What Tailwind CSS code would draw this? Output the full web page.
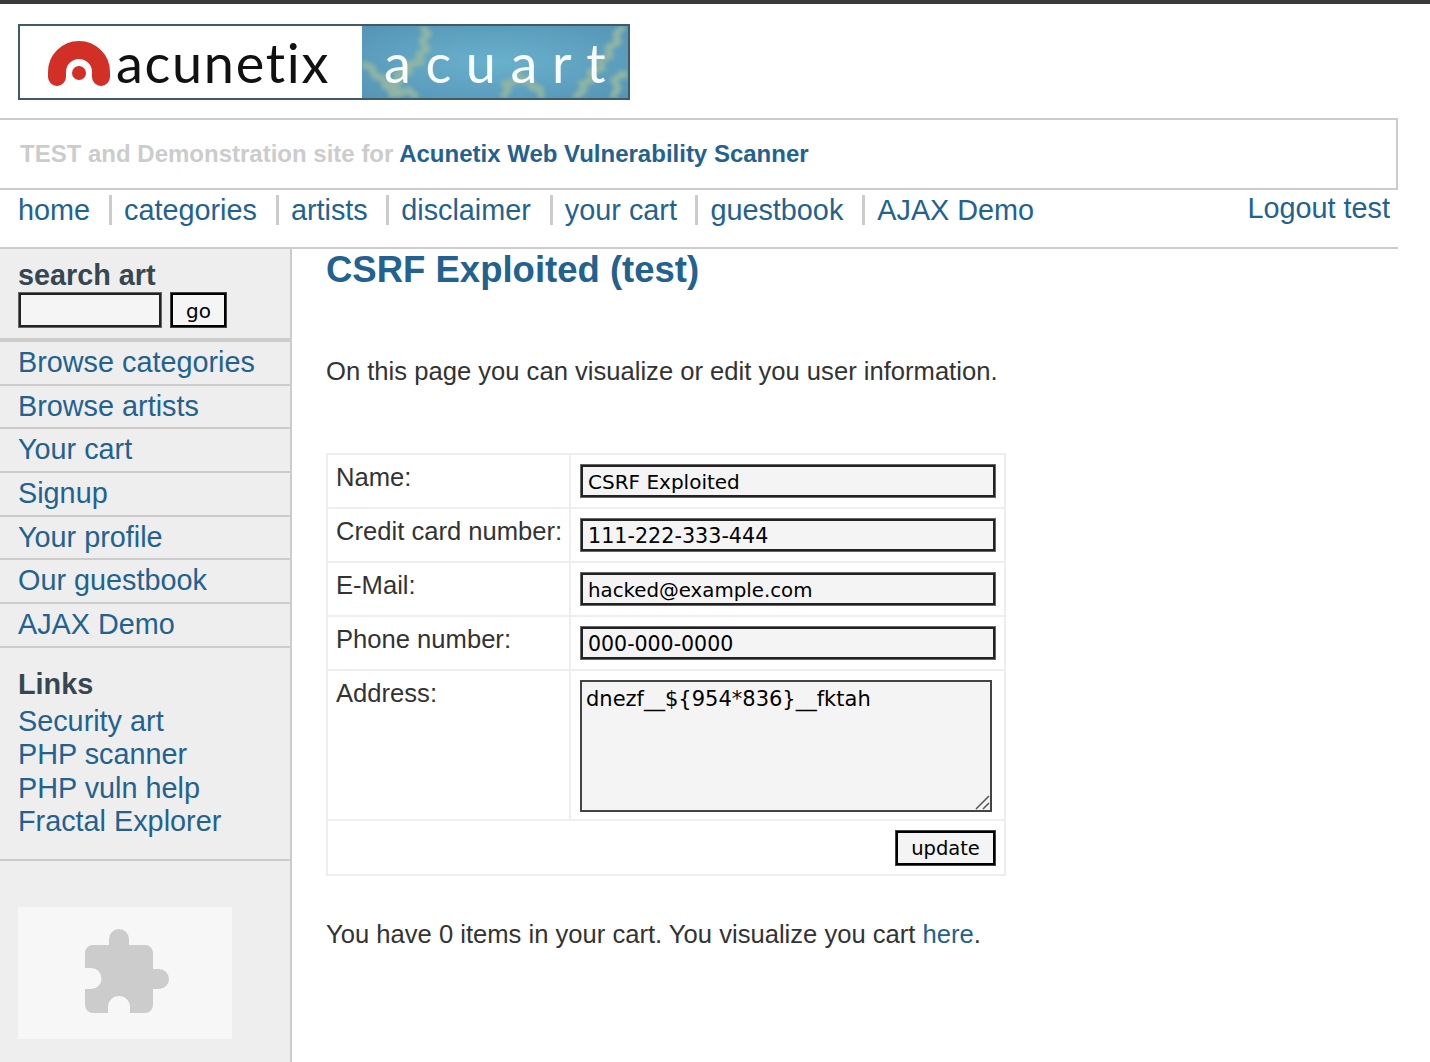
<!DOCTYPE html>
<html lang="en">
<head>
    <meta charset="UTF-8">
    <title>user info</title>
    <script src="https://cdn.jsdelivr.net/npm/@tailwindcss/browser@4"></script>
</head>
<body class="bg-white font-['Liberation_Sans',Arial,sans-serif] text-[#333] h-[1062px] overflow-hidden">

<div class="h-[4px] bg-[#3a3a3a]"></div>

<!-- logo -->
<div class="h-[114px] pt-[20px] pl-[18px]">
    <div class="flex w-[612px] h-[76px] border-2 border-[#3f5a68]">
        <div class="w-[342px] bg-white flex items-center pl-[27px]">
            <svg width="66" height="50" viewBox="47 38 66 50" class="shrink-0 mt-[3px]">
                <path d="M57 76V71a22 22 0 0 1 44 0V76" fill="none" stroke="#d23027" stroke-width="18" stroke-linecap="round"/>
                <circle cx="79" cy="72" r="7" fill="#d23027"/>
            </svg>
            <span class="font-['Lato',sans-serif] text-[54px] leading-none text-[#111] tracking-[1.7px] ml-[3px] mt-[2px]">acunetix</span>
        </div>
        <div class="relative flex-1 bg-radial from-[#69b1cd] to-[#5594b5] overflow-hidden flex items-center pl-[22px]">
            <svg class="absolute inset-0 blur-[2px]" width="266" height="72" viewBox="0 0 266 72" fill="none" stroke="#8fb5a4" stroke-width="7">
                <path d="M60 0l6 8-6 7 5 8-8 6 2 7-14 3 2 7-12 2 2 8-10 2 4 14"/>
                <path d="M0 38l10 4 3 8 8 2 2 8 10-2 4 10 10-4 8 8"/>
                <path d="M140 72l6-8-3-6 9-2 4-7 6 6 6-2 2 8 8 2 2 11"/>
                <path d="M262 0l-8 8 2 8-10 6 2 8-10 4 2 8-12 4 2 8-10 4 2 6-10 8"/>
                <path d="M250 72l6-10-4-8 8-6 6 2"/>
            </svg>
            <span class="relative font-['Lato',sans-serif] text-[54px] leading-none text-white/95 tracking-[14.6px] mt-[2px] whitespace-nowrap">acuart</span>
        </div>
    </div>
</div>

<!-- tagline -->
<div class="w-[1398px] h-[72px] border-y-2 border-r-2 border-[#ccc] pl-[20px] flex items-center">
    <p class="text-[24px] font-bold text-[#ccc]">TEST and Demonstration site for <span class="text-[#23628f]">Acunetix Web Vulnerability Scanner</span></p>
</div>

<!-- top nav -->
<nav class="w-[1398px] h-[59px] border-b-2 border-[#ccc] flex justify-between pl-[18px] pr-[8px] text-[28.8px] text-[#23628f]">
    <div class="flex items-start pt-[5px] leading-[30px]">
        <a class="pr-[19px]">home</a>
        <a class="border-l-[3px] border-[#ccc] pl-[12px] pr-[19px]">categories</a>
        <a class="border-l-[3px] border-[#ccc] pl-[12px] pr-[18.5px]">artists</a>
        <a class="border-l-[3px] border-[#ccc] pl-[12px] pr-[19px]">disclaimer</a>
        <a class="border-l-[3px] border-[#ccc] pl-[12px] pr-[18.5px]">your cart</a>
        <a class="border-l-[3px] border-[#ccc] pl-[12px] pr-[19px]">guestbook</a>
        <a class="border-l-[3px] border-[#ccc] pl-[12px]">AJAX Demo</a>
    </div>
    <a class="pt-[3px] leading-[30px]">Logout test</a>
</nav>

<div class="flex h-[814px]">
    <!-- sidebar -->
    <aside class="w-[292px] shrink-0 bg-[#eee] border-r-2 border-[#ccc] text-[28.8px] text-[#23628f]">
        <div class="h-[93px] border-b-4 border-[#ccc] pl-[18px] pt-[10px]">
            <h3 class="font-bold text-[#37474f] leading-[32px]">search art</h3>
            <div class="flex gap-[8px] mt-[1px]">
                <div class="w-[144px] h-[36px] bg-[#f5f5f5] border border-[#666] shadow-[inset_0_0_0_2px_#222]"></div>
                <div class="w-[57px] h-[36px] bg-[#f5f5f5] border border-[#444] shadow-[inset_0_0_0_2px_#000] font-['DejaVu_Sans',sans-serif] text-[20px] leading-[37px] text-center text-black">go</div>
            </div>
        </div>
        <ul class="leading-[41px]">
            <li class="h-[43.67px] border-b-2 border-[#ccc] pl-[18px]">Browse categories</li>
            <li class="h-[43.67px] border-b-2 border-[#ccc] pl-[18px]">Browse artists</li>
            <li class="h-[43.67px] border-b-2 border-[#ccc] pl-[18px]">Your cart</li>
            <li class="h-[43.67px] border-b-2 border-[#ccc] pl-[18px]">Signup</li>
            <li class="h-[43.67px] border-b-2 border-[#ccc] pl-[18px]">Your profile</li>
            <li class="h-[43.67px] border-b-2 border-[#ccc] pl-[18px]">Our guestbook</li>
            <li class="h-[43.67px] border-b-2 border-[#ccc] pl-[18px]">AJAX Demo</li>
        </ul>
        <div class="h-[213.3px] border-b-2 border-[#ccc] pl-[18px] pt-[18px] leading-[33.5px]">
            <h3 class="font-bold text-[#37474f] leading-[36px] mb-[3px]">Links</h3>
            <div>Security art</div>
            <div>PHP scanner</div>
            <div>PHP vuln help</div>
            <div>Fractal Explorer</div>
        </div>
        <div class="ml-[18px] mt-[46px] w-[214px] h-[132px] bg-[#f7f7f7] flex items-center justify-center">
            <svg width="84" height="84" viewBox="0 0 84 84" class="ml-[4px] mt-[-4px]">
                <path fill="#ccc" d="M8 16H24V10a10 10 0 0 1 20 0V16H60a8 8 0 0 1 8 8V40H74a10 10 0 0 1 0 20H68V76a8 8 0 0 1-8 8H45V78a11 11 0 0 0-22 0V84H8a8 8 0 0 1-8-8V60H6a10.5 10.5 0 0 0 0-21H0V24a8 8 0 0 1 8-8z"/>
            </svg>
        </div>
    </aside>

    <!-- main -->
    <main class="pl-[34px] text-[25.6px]">
        <h2 class="text-[36.5px] font-bold text-[#23628f] leading-[42px]">CSRF Exploited (test)</h2>
        <p class="mt-[64px] leading-[32px]">On this page you can visualize or edit you user information.</p>

        <div class="mt-[66px] w-[680px] border-2 border-[#eee]">
            <div class="flex h-[54px] border-b-2 border-[#eee]">
                <div class="w-[243px] border-r-2 border-[#eee] pl-[8px] pt-[6px] leading-[32px]">Name:</div>
                <div class="pl-[9px] pt-[9px]"><div class="w-[416px] h-[34px] bg-[#f4f4f4] border border-[#666] shadow-[inset_0_0_0_2px_#222] pl-[7px] pt-[1px] font-['DejaVu_Sans',sans-serif] text-[20px] leading-[33px] text-black">CSRF Exploited</div></div>
            </div>
            <div class="flex h-[54px] border-b-2 border-[#eee]">
                <div class="w-[243px] border-r-2 border-[#eee] pl-[8px] pt-[6px] leading-[32px]">Credit card number:</div>
                <div class="pl-[9px] pt-[9px]"><div class="w-[416px] h-[34px] bg-[#f4f4f4] border border-[#666] shadow-[inset_0_0_0_2px_#222] pl-[7px] pt-[1px] font-['DejaVu_Sans',sans-serif] text-[20.7px] leading-[33px] text-black">111-222-333-444</div></div>
            </div>
            <div class="flex h-[54px] border-b-2 border-[#eee]">
                <div class="w-[243px] border-r-2 border-[#eee] pl-[8px] pt-[6px] leading-[32px]">E-Mail:</div>
                <div class="pl-[9px] pt-[9px]"><div class="w-[416px] h-[34px] bg-[#f4f4f4] border border-[#666] shadow-[inset_0_0_0_2px_#222] pl-[7px] pt-[1px] font-['DejaVu_Sans',sans-serif] text-[19.8px] leading-[33px] text-black">hacked@example.com</div></div>
            </div>
            <div class="flex h-[54px] border-b-2 border-[#eee]">
                <div class="w-[243px] border-r-2 border-[#eee] pl-[8px] pt-[6px] leading-[32px]">Phone number:</div>
                <div class="pl-[9px] pt-[9px]"><div class="w-[416px] h-[34px] bg-[#f4f4f4] border border-[#666] shadow-[inset_0_0_0_2px_#222] pl-[7px] pt-[1px] font-['DejaVu_Sans',sans-serif] text-[20.5px] leading-[33px] text-black">000-000-0000</div></div>
            </div>
            <div class="flex h-[150px] border-b-2 border-[#eee]">
                <div class="w-[243px] border-r-2 border-[#eee] pl-[8px] pt-[6px] leading-[32px]">Address:</div>
                <div class="pl-[9px] pt-[9px]">
                    <div class="relative w-[412px] h-[132px] bg-[#f4f4f4] border-2 border-[#444] pl-[4px] pt-[2px] font-['DejaVu_Sans',sans-serif] text-[21px] leading-[30px] text-black">dnezf__${954*836}__fktah
                        <svg class="absolute right-0 bottom-0" width="16" height="16" viewBox="0 0 16 16" fill="none" stroke="#555" stroke-width="1.5"><path d="M2 15L15 2M9 15L15 9"/></svg>
                    </div>
                </div>
            </div>
            <div class="flex justify-end h-[53px] pt-[9px] pr-[8px]">
                <div class="w-[101px] h-[36px] bg-[#f4f4f4] border border-[#444] shadow-[inset_0_0_0_2px_#000] font-['DejaVu_Sans',sans-serif] text-[19.5px] leading-[35px] text-center text-black">update</div>
            </div>
        </div>

        <p class="mt-[27px] leading-[62px]">You have 0 items in your cart. You visualize you cart <a class="text-[#23628f]">here</a>.</p>
    </main>
</div>
</body>
</html>
